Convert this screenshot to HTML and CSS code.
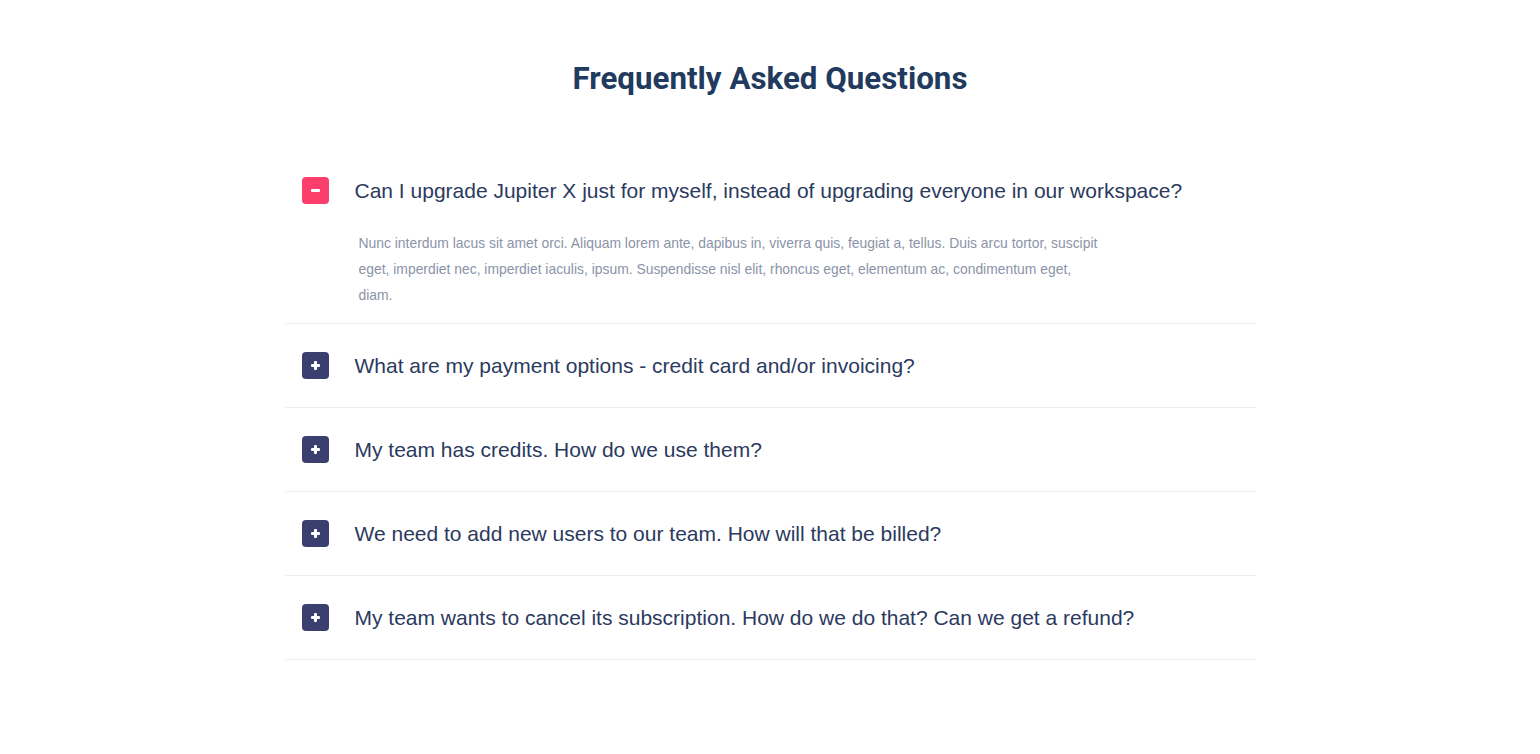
FILE: index.html
```html
<!DOCTYPE html>
<html lang="en">
<head>
    <meta charset="UTF-8">
    <meta name="viewport" content="width=device-width, initial-scale=1.0">
    <title>FAQ</title>
    <link rel="stylesheet" href="styles.css">
</head>
<body>

    <div class="faq">
        <h2 class="faq-title">Frequently Asked Questions</h2>

        <ul class="faq-list">
            <li class="faq-item open">
                <div class="faq-head">
                    <span class="faq-icon minus"></span>
                    <span class="faq-q">Can I upgrade Jupiter X just for myself, instead of upgrading everyone in our workspace?</span>
                </div>
                <p class="faq-a">Nunc interdum lacus sit amet orci. Aliquam lorem ante, dapibus in, viverra quis, feugiat a, tellus. Duis arcu tortor, suscipit eget, imperdiet nec, imperdiet iaculis, ipsum. Suspendisse nisl elit, rhoncus eget, elementum ac, condimentum eget, diam.</p>
            </li>
            <li class="faq-item">
                <div class="faq-head">
                    <span class="faq-icon plus"></span>
                    <span class="faq-q">What are my payment options - credit card and/or invoicing?</span>
                </div>
            </li>
            <li class="faq-item">
                <div class="faq-head">
                    <span class="faq-icon plus"></span>
                    <span class="faq-q">My team has credits. How do we use them?</span>
                </div>
            </li>
            <li class="faq-item">
                <div class="faq-head">
                    <span class="faq-icon plus"></span>
                    <span class="faq-q">We need to add new users to our team. How will that be billed?</span>
                </div>
            </li>
            <li class="faq-item">
                <div class="faq-head">
                    <span class="faq-icon plus"></span>
                    <span class="faq-q">My team wants to cancel its subscription. How do we do that? Can we get a refund?</span>
                </div>
            </li>
        </ul>
    </div>

</body>
</html>
```

FILE: styles.css
```css
body { margin: 0; background: #fff; font-family: "Liberation Sans", Arial, sans-serif; }
.faq { width: 971px; margin: 0 auto; padding-top: 59px; }
.faq-title { margin: 0; font-family: Roboto, sans-serif; font-weight: 700; font-size: 31.3px; line-height: 40px; color: #213a5e; text-align: center; }
.faq-list { list-style: none; margin: 50px 0 0; padding: 0; }
.faq-item { border-bottom: 1px solid #ececf3; padding: 28px 17px; }
.faq-item.open { padding-bottom: 15px; }
.faq-head { display: flex; align-items: center; gap: 26px; height: 27px; }
.faq-icon { position: relative; flex: none; width: 27px; height: 27px; border-radius: 4px; background: #3b3f6f; }
.faq-icon.minus { background: #fc3e6d; }
.faq-icon::before, .faq-icon::after { content: ""; position: absolute; left: 50%; top: 50%; background: #fff; border-radius: 1px; }
.faq-icon::before { width: 9px; height: 3px; margin: -1.5px 0 0 -4.5px; }
.faq-icon.plus::after { width: 3px; height: 9px; margin: -4.5px 0 0 -1.5px; }
.faq-q { font-size: 21px; color: #2b3a5e; white-space: nowrap; }
.faq-a { margin: 26px 0 0 57px; max-width: 745px; font-size: 13.9px; line-height: 26px; color: #8b93a7; }
```
